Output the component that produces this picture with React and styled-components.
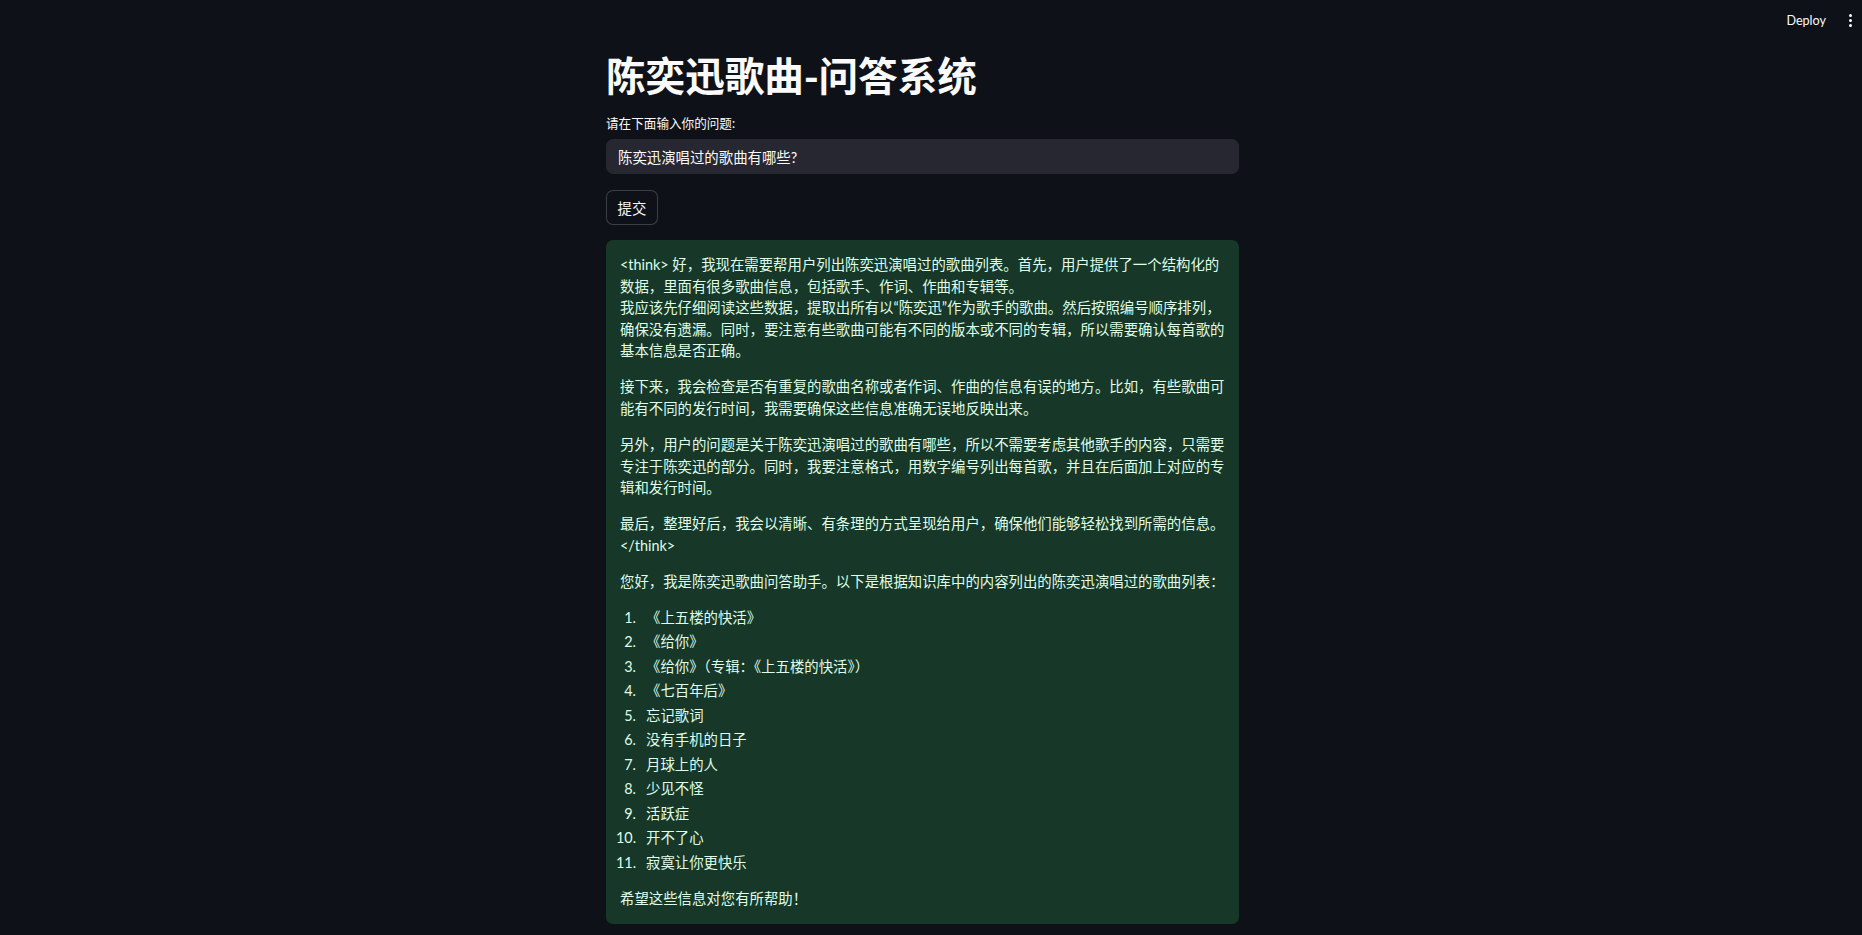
import React from "react";
import styled, { createGlobalStyle } from "styled-components";

const GlobalStyle = createGlobalStyle`
  html, body {
    margin: 0;
    padding: 0;
    height: 100%;
    overflow: hidden;
    background: #0e1117;
  }
  body {
    font-family: Lato, "Noto Sans CJK SC", sans-serif;
    color: #fafafa;
  }
`;

const AppShell = styled.div`
  display: flex;
  flex-direction: column;
  height: 935px;
  background: #0e1117;
`;

const Header = styled.header`
  display: flex;
  justify-content: flex-end;
  align-items: center;
  height: 40px;
  padding-right: 10px;
  gap: 23px;
`;

const DeployButton = styled.button`
  background: transparent;
  border: none;
  padding: 0;
  color: #fafafa;
  font-family: Lato, "Noto Sans CJK SC", sans-serif;
  font-size: 12.6px;
  cursor: pointer;
`;

const Kebab = styled.div`
  display: flex;
  flex-direction: column;
  gap: 2px;
  span {
    width: 3px;
    height: 3px;
    border-radius: 50%;
    background: #fafafa;
  }
`;

const Main = styled.main`
  display: flex;
  justify-content: center;
  padding: 10px 17px 0 0;
`;

const Column = styled.div`
  width: 633px;
  display: flex;
  flex-direction: column;
`;

const Title = styled.h1`
  margin: 0;
  font-family: "Noto Sans CJK SC", sans-serif;
  font-size: 39.6px;
  font-weight: 700;
  line-height: 48px;
  color: #fafafa;
`;

const Label = styled.label`
  margin-top: 16px;
  font-size: 12.6px;
  line-height: 19px;
  color: #fafafa;
`;

const Input = styled.input`
  margin-top: 6px;
  height: 35px;
  box-sizing: border-box;
  border: 1px solid #262730;
  border-radius: 7px;
  background: #262730;
  color: #fafafa;
  padding: 0 11px;
  font-family: Lato, "Noto Sans CJK SC", sans-serif;
  font-size: 14.4px;
  outline: none;
`;

const SubmitButton = styled.button`
  align-self: flex-start;
  margin-top: 16px;
  height: 35px;
  width: 52px;
  box-sizing: border-box;
  background: #0e1117;
  border: 1px solid rgba(250, 250, 250, 0.2);
  border-radius: 7px;
  color: #fafafa;
  font-family: Lato, "Noto Sans CJK SC", sans-serif;
  font-size: 14.4px;
  cursor: pointer;
`;

const Alert = styled.div`
  margin-top: 15px;
  background: #173828;
  border-radius: 7px;
  padding: 14px 13px 15px 14px;
  color: #dffde9;
  font-size: 14.4px;
  line-height: 21.6px;

  p {
    margin: 0 0 14.4px;
  }
  p:last-child {
    margin-bottom: 0;
  }
`;

const SongList = styled.ol`
  list-style: none;
  counter-reset: song;
  margin: 0 0 14.4px;
  padding: 0;
`;

const SongItem = styled.li`
  counter-increment: song;
  display: grid;
  grid-template-columns: 20px 1fr;
  column-gap: 10px;
  margin: 2.9px 0 2.9px -4px;

  &::before {
    content: counter(song) ".";
    text-align: right;
  }
`;

const songs = [
  "《上五楼的快活》",
  "《给你》",
  "《给你》（专辑：《上五楼的快活》）",
  "《七百年后》",
  "忘记歌词",
  "没有手机的日子",
  "月球上的人",
  "少见不怪",
  "活跃症",
  "开不了心",
  "寂寞让你更快乐",
];

export default function App() {
  return (
    <>
      <GlobalStyle />
      <AppShell>
        <Header>
          <DeployButton>Deploy</DeployButton>
          <Kebab>
            <span />
            <span />
            <span />
          </Kebab>
        </Header>
        <Main>
          <Column>
            <Title>陈奕迅歌曲-问答系统</Title>
            <Label>请在下面输入你的问题:</Label>
            <Input defaultValue="陈奕迅演唱过的歌曲有哪些?" />
            <SubmitButton>提交</SubmitButton>
            <Alert>
              <p>
                &lt;think&gt; 好，我现在需要帮用户列出陈奕迅演唱过的歌曲列表。首先，用户提供了一个结构化的数据，里面有很多歌曲信息，包括歌手、作词、作曲和专辑等。
                <br />
                我应该先仔细阅读这些数据，提取出所有以“陈奕迅”作为歌手的歌曲。然后按照编号顺序排列，确保没有遗漏。同时，要注意有些歌曲可能有不同的版本或不同的专辑，所以需要确认每首歌的基本信息是否正确。
              </p>
              <p>
                接下来，我会检查是否有重复的歌曲名称或者作词、作曲的信息有误的地方。比如，有些歌曲可能有不同的发行时间，我需要确保这些信息准确无误地反映出来。
              </p>
              <p>
                另外，用户的问题是关于陈奕迅演唱过的歌曲有哪些，所以不需要考虑其他歌手的内容，只需要专注于陈奕迅的部分。同时，我要注意格式，用数字编号列出每首歌，并且在后面加上对应的专辑和发行时间。
              </p>
              <p>
                最后，整理好后，我会以清晰、有条理的方式呈现给用户，确保他们能够轻松找到所需的信息。
                &lt;/think&gt;
              </p>
              <p>
                您好，我是陈奕迅歌曲问答助手。以下是根据知识库中的内容列出的陈奕迅演唱过的歌曲列表：
              </p>
              <SongList>
                {songs.map((song, i) => (
                  <SongItem key={i}>
                    <span>{song}</span>
                  </SongItem>
                ))}
              </SongList>
              <p>希望这些信息对您有所帮助！</p>
            </Alert>
          </Column>
        </Main>
      </AppShell>
    </>
  );
}
